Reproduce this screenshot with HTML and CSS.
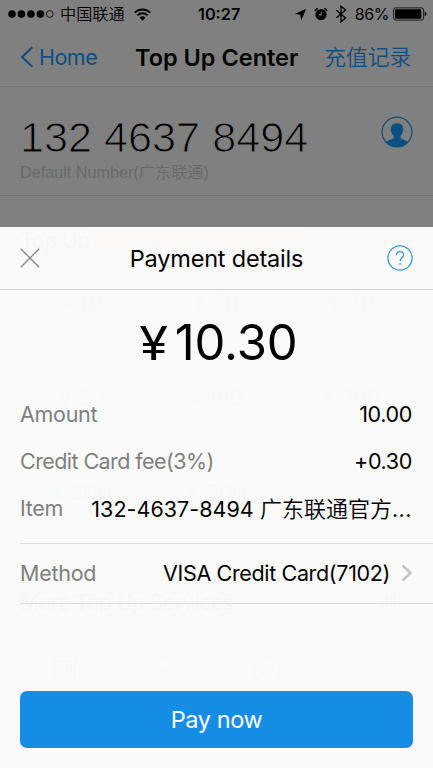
FILE: index.html
```
<!DOCTYPE html>
<html lang="en">
<head>
<meta charset="utf-8">
<meta name="viewport" content="width=device-width, initial-scale=1">
<title>Top Up Center</title>
<link rel="stylesheet" href="styles.css">
</head>
<body>
<div class="screen">
  <header class="status">
    <div class="status-left">
      <svg class="signal" width="46" height="10" viewBox="0 0 46 10"><circle cx="4" cy="5" r="3.8"/><circle cx="13.4" cy="5" r="3.8"/><circle cx="22.9" cy="5" r="3.8"/><circle cx="32.4" cy="5" r="3.8"/><circle cx="41.8" cy="5" r="3.4" fill="none" stroke="#000" stroke-width=".8"/></svg>
      <span class="carrier">中国联通</span>
      <svg class="wifi" width="17" height="13" viewBox="0 0 17 13" fill="none" stroke="#000" stroke-width="1.9"><path d="M.8 4.7a10.9 10.9 0 0 1 15.4 0M3.4 7.4a7.2 7.2 0 0 1 10.2 0"/><path d="M8.5 12.8 5.6 9.8a4.1 4.1 0 0 1 5.8 0z" fill="#000" stroke="none"/></svg>
    </div>
    <span class="clock">10:27</span>
    <div class="status-right">
      <svg class="arrow" width="13" height="13" viewBox="0 0 13 13"><path d="M12.2.8 7.2 12.2 6.3 6.8.8 6.1z"/></svg>
      <svg class="alarm" width="14" height="14" viewBox="0 0 14 14"><circle cx="7" cy="7.6" r="5.6"/><path d="M.8 3.9 3.6 1.2M13.2 3.9 10.4 1.2" stroke="#000" stroke-width="1.5"/><path d="M7.3 4.4v3.5H4.7" stroke="#808080" stroke-width="1.1" fill="none"/></svg>
      <svg class="bluetooth" width="12" height="18" viewBox="0 0 12 18" fill="none" stroke="#000" stroke-width="1.3"><path d="m1.2 4.9 9.4 8L6 16.8V1.2l4.6 3.9-9.4 8"/></svg>
      <span class="percent">86%</span>
      <svg class="battery" width="34" height="14" viewBox="0 0 34 14"><rect x=".6" y=".9" width="30" height="12.2" rx="2" fill="none" stroke="#000" stroke-width=".8"/><rect x="2" y="2.3" width="26.3" height="9.4" rx=".8"/><path d="M31.7 4.8q1.8.3 1.8 2.2t-1.8 2.2z"/></svg>
    </div>
  </header>
  <nav class="nav">
    <a class="back"><svg width="14" height="22" viewBox="0 0 14 22" fill="none" stroke="#0d4f80" stroke-width="2.1"><path d="M12.4 1.2 2 11l10.4 9.8"/></svg><span>Home</span></a>
    <h1>Top Up Center</h1>
    <a class="records">充值记录</a>
  </nav>
  <section class="number">
    <div>
      <div class="digits">132 4637 8494</div>
      <div class="default">Default Number(广东联通)</div>
    </div>
    <svg class="contact" width="32" height="32" viewBox="0 0 32 32"><circle cx="16" cy="16" r="14.9" fill="none" stroke="#0d4f80" stroke-width="1.2"/><path d="M16 7.3c-4.2 0-6.5 2.5-6.2 6.4.2 2.9 1.5 4.7 2.7 6 .4 2.4-.4 3.1-2.5 3.7-2.3.7-3.9 1.5-5.2 2.8Q9.4 31 16 31t11.2-4.8c-1.3-1.3-2.9-2.1-5.2-2.8-2.1-.6-2.9-1.3-2.5-3.7 1.2-1.3 2.5-3.1 2.7-6 .3-3.9-2-6.4-6.2-6.4z" fill="#0d4f80"/></svg>
  </section>
  <section class="topup">
    <div class="topup-head"><h2>Top Up</h2><div class="promo"></div></div>
    <div class="tiles">
      <div>¥ 10</div><div>¥ 20</div><div>¥ 30</div>
      <div>¥ 50</div><div>¥ 100</div><div>¥ 200</div>
      <div>¥ 300</div><div>¥ 500</div>
    </div>
  </section>
  <section class="services">
    <div class="services-head"><h2>More Top Up Services</h2><span>all</span></div>
    <div class="service-icons">
      <svg width="28" height="32" viewBox="0 0 28 32"><rect x="4" y="2" width="20" height="27"/><path d="M8 7h12v17H8zM12 11v9M16 11v9"/></svg>
      <svg width="28" height="32" viewBox="0 0 28 32"><path d="M8 6q6-8 12 0"/><circle cx="14" cy="16" r="12"/><path d="M11 16h6M14 13v6"/></svg>
      <svg width="28" height="32" viewBox="0 0 28 32"><path d="m14 1 12 7v15l-12 7-12-7V8z"/><path d="M8 16h12a6 6 0 1 0-2 5"/></svg>
      <svg class="coupon" width="32" height="32" viewBox="0 0 32 32"><path d="M2 6h28v7a3 3 0 0 0 0 6v7H2z"/><path d="m12 12 7 4-7 4z"/></svg>
    </div>
  </section>

  <main class="sheet">
    <header class="sheet-head">
      <svg class="close" width="20" height="20" viewBox="0 0 20 20" stroke="#858585" stroke-width="1.3"><path d="m.8.8 18.4 18.4M19.2.8.8 19.2"/></svg>
      <h2>Payment details</h2>
      <svg class="help" width="26" height="26" viewBox="0 0 26 26" fill="none" stroke="#3296e4" stroke-width="1.2"><circle cx="13" cy="13" r="12.1"/><path d="M9.4 10.2c0-2.3 1.5-3.6 3.6-3.6s3.6 1.3 3.6 3.2c0 3-3.5 3-3.5 6.2"/><circle cx="13.1" cy="18.9" r=".9" fill="#3296e4" stroke="none"/></svg>
    </header>
    <div class="total"><span class="yen">¥</span><span class="sum">10.30</span></div>
    <dl class="rows">
      <div><dt class="t-amount">Amount</dt><dd class="v-amount">10.00</dd></div>
      <div><dt class="t-fee">Credit Card fee(3%)</dt><dd class="v-fee">+0.30</dd></div>
      <div><dt class="t-item">Item</dt><dd class="v-item">132-4637-8494 <span class="shop">广东联通官方</span><span class="dots">...</span></dd></div>
    </dl>
    <div class="method"><span class="t-method">Method</span><span class="v-method">VISA Credit Card(7102)</span><svg width="12" height="18" viewBox="0 0 12 18" fill="none" stroke="#c3c3c8" stroke-width="2.5"><path d="m1.5 1.5 8 7.5-8 7.5"/></svg></div>
    <button class="pay"><span>Pay now</span></button>
  </main>
</div>
</body>
</html>
```
FILE: styles.css
```
* { box-sizing: border-box; margin: 0; padding: 0; }
body {
  background: #808080;
  font-family: Inter, "Noto Sans CJK SC", sans-serif;
  color: #000;
}
.screen { position: relative; width: 433px; height: 768px; overflow: hidden; background: #808080; }
svg { display: block; flex: none; }
h1, h2 { font-weight: 400; }
span, h1, h2, dt, dd, a { white-space: nowrap; }

.status { display: grid; grid-template-columns: 190px 43px 1fr; align-items: center; height: 28px; padding: 0 6px 0 8px; }
.status-left, .status-right { display: flex; align-items: center; }
.status-right { justify-content: flex-end; }
.carrier { margin-left: 6px; font: 350 16.2px "Noto Sans CJK SC", sans-serif; line-height: 26px; padding-bottom: 2px; }
.wifi { margin-left: 9px; }
.clock { font-size: 16.3px; font-weight: 600; }
.alarm { margin-left: 7px; }
.bluetooth { margin-left: 7px; }
.percent { margin-left: 8px; font-size: 16px; letter-spacing: -.4px; }
.battery { margin-left: 4px; }

.nav { display: grid; grid-template-columns: 115px 1fr 115px; align-items: center; height: 59px; padding: 0 22px 0 20px; border-bottom: 1px solid #767676; color: #0d4f80; }
.back { display: flex; align-items: center; gap: 5px; font-size: 21.5px; letter-spacing: -.5px; }
.nav h1 { color: #000; font-size: 23.5px; font-weight: 600; }
.records { justify-self: end; margin-right: 2px; padding-bottom: 4px; font: 350 21.8px "Noto Sans CJK SC", sans-serif; }

.number { display: flex; justify-content: space-between; height: 109px; padding: 26px 20px 0 20px; border-bottom: 1px solid #737373; }
.digits { font: 43.2px/48px "Liberation Sans", sans-serif; -webkit-text-stroke: 1.1px #808080; }
.default { font: 16.2px/22px "Liberation Sans", "Noto Sans CJK SC", sans-serif; font-weight: 350; color: #696969; }
.contact { margin-top: 3px; }

.topup { height: 384px; padding: 31px 20px 0; }
.topup-head { display: flex; align-items: center; height: 26px; }
.topup-head h2, .services h2 { font-size: 21px; font-weight: 500; letter-spacing: -.3px; }
.promo { width: 207px; height: 20px; margin-left: 5px; background: #a03c44; }
.tiles { display: grid; grid-template-columns: repeat(3, 123px); gap: 13.5px 12px; margin-top: 21px; }
.tiles div { height: 81px; border: 1px solid #5c5c5c; padding-top: 15px; text-align: center; font-size: 22px; color: #323c46; }
.services { padding: 10px 20px 0; }
.services h2 { letter-spacing: -.45px; }
.services-head { display: flex; justify-content: space-between; padding-right: 16px; }
.service-icons { display: grid; grid-template-columns: repeat(4, 1fr); justify-items: center; margin: 40px -5px 0; }
.service-icons svg { fill: none; stroke: #3c3c3c; stroke-width: 1.5; }
.service-icons .coupon { stroke: #8a7530; }

.sheet { position: absolute; left: 0; right: 0; bottom: 0; height: 541px; background: rgba(254, 254, 254, .97); }
.sheet-head { display: grid; grid-template-columns: 26px 1fr 26px; align-items: center; justify-items: center; height: 63px; padding: 0 20px; border-bottom: 1px solid #cfcfcf; }
.close { justify-self: start; }
.sheet-head h2 { font-size: 23.5px; letter-spacing: -.2px; }
.total { display: flex; justify-content: center; align-items: baseline; height: 100px; padding-left: 5px; line-height: 106px; font-size: 49px; }
.yen { margin-right: 9px; font-size: 46px; transform: scaleX(1.14); }
.sum { letter-spacing: -.2px; }
.rows > div { display: flex; justify-content: space-between; align-items: center; height: 47.5px; padding: 0 21px 0 20px; font-size: 21.5px; letter-spacing: -.3px; }
dt, .t-method { color: #808080; }
.rows dd { letter-spacing: -.35px; }
.rows .t-fee { letter-spacing: -.57px; }
.rows .v-item { letter-spacing: .04px; }
.shop { font: 350 22px/26px "Noto Sans CJK SC", sans-serif; letter-spacing: 0; }
.dots { letter-spacing: .5px; }
.rows > div:last-child { height: 47px; padding-bottom: 1px; }
.method { display: flex; align-items: center; height: 61px; margin: 11px 0 0 20px; padding: 0 20px 2px 0; border-top: 1px solid #dedede; border-bottom: 1px solid #dedede; font-size: 21.5px; }
.t-method { letter-spacing: -.25px; }
.v-method { margin-left: auto; letter-spacing: -.35px; }
.method svg { margin-left: 11px; }
.pay { display: block; width: 393px; height: 57px; margin: 87px 20px 0; border: 0; border-radius: 7px; background: #168de5; color: #fff; font: 23.5px Inter, sans-serif; letter-spacing: -.4px; }
```
